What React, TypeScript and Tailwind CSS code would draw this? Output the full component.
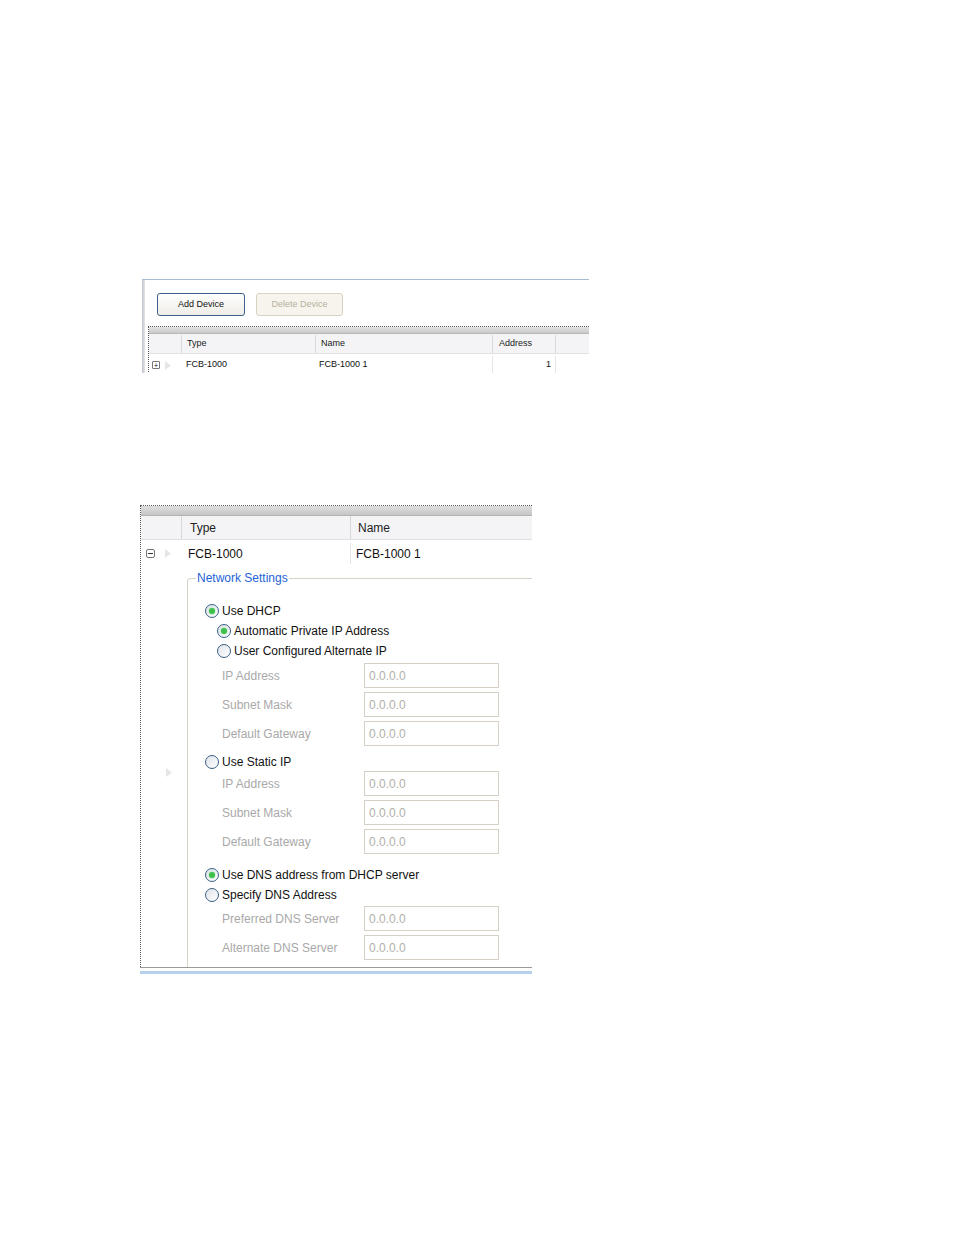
import React from "react";

function Radio({ checked }: { checked?: boolean }) {
  return (
    <span className="flex h-[14px] w-[14px] shrink-0 items-center justify-center rounded-full border border-[#3a5f86] bg-gradient-to-br from-[#dfe3e9] to-white">
      {checked && <span className="h-[6px] w-[6px] rounded-full bg-[#3fbf4c] shadow-[0_0_2px_#7fd98a]" />}
    </span>
  );
}

function RadioRow({ label, checked, indent, h }: { label: string; checked?: boolean; indent?: boolean; h: string }) {
  return (
    <div className={`flex items-center gap-[3px] text-[#111] ${h} ${indent ? "pl-[29px]" : "pl-[17px]"}`}>
      <Radio checked={checked} />
      <span>{label}</span>
    </div>
  );
}

function Field({ label }: { label: string }) {
  return (
    <div className="flex h-[29px] items-center pl-[34px]">
      <span className="w-[142px] text-[#a9a9a9]">{label}</span>
      <div className="flex h-[25px] w-[135px] items-center border border-[#d6d0c6] pl-[4px] text-[#b2afa9]">0.0.0.0</div>
    </div>
  );
}

function Arrow() {
  return (
    <svg width="6" height="9" viewBox="0 0 6 9">
      <path d="M0 0 L6 4.5 L0 9 Z" fill="#e6e6e6" />
    </svg>
  );
}

export default function App() {
  return (
    <div className="relative h-[1235px] w-[954px] bg-white pt-[279px] font-['Liberation_Sans',Arial,sans-serif]">
      {/* Panel 1 - device list */}
      <div className="ml-[142px] h-[94px] w-[447px] overflow-hidden border-t border-[#a6bcd2] text-[9px]">
        <div className="flex h-full">
          <div className="w-[3px] bg-gradient-to-r from-[#bfc3ca] to-[#e4e6ea]" />
          <div className="flex-1">
            <div className="flex gap-[11px] pl-[12px] pt-[13px]">
              <button className="h-[23px] w-[88px] rounded-[3px] border border-[#3d5f88] bg-gradient-to-b from-white to-[#eeede6] text-[#111]">
                Add Device
              </button>
              <button className="h-[23px] w-[87px] rounded-[3px] border border-[#d9d3c2] bg-[#f6f4ec] text-[#b7b0a0]">
                Delete Device
              </button>
            </div>
            <div className="ml-[3px] mt-[10px] border-l border-t border-dotted border-[#555]">
              <div className="h-[7px] border-b border-[#b8b8b8] bg-gradient-to-b from-[#e2e2e2] to-[#c9c9c9]" />
              <div className="flex h-[20px] items-center border-b border-[#e2e2e6] bg-[#f4f4f6] pt-[1px] text-[#222]">
                <div className="h-full w-[32px]" />
                <div className="flex h-full w-[134px] items-center border-l border-[#dadada] pl-[5px]">Type</div>
                <div className="flex h-full w-[177px] items-center border-l border-[#dadada] pl-[5px]">Name</div>
                <div className="flex h-full w-[63px] items-center border-l border-[#dadada] pl-[6px]">Address</div>
                <div className="h-full flex-1 border-l border-[#dadada]" />
              </div>
              <div className="flex h-[20px] items-center pt-[2px] text-[#111]">
                <div className="flex h-full w-[32px] items-center gap-[5px] pl-[3px]">
                  <span className="flex h-[8px] w-[8px] items-center justify-center rounded-[1px] border border-[#777] text-[7px] leading-none">+</span>
                  <Arrow />
                </div>
                <div className="flex h-full w-[134px] items-center pl-[5px]">FCB-1000</div>
                <div className="flex h-full w-[177px] items-center pl-[4px]">FCB-1000 1</div>
                <div className="flex h-full w-[63px] items-center justify-end border-l border-[#e6e6e6] pr-[4px]">1</div>
                <div className="h-full flex-1 border-l border-[#e6e6e6]" />
              </div>
            </div>
          </div>
        </div>
      </div>

      {/* Panel 2 - expanded device */}
      <div className="ml-[140px] mt-[132px] w-[392px] text-[12px]">
        <div className="border-l border-t border-dotted border-[#555]">
          <div className="h-[10px] border-b border-[#b3b3b3] bg-gradient-to-b from-[#dedede] to-[#c6c6c6]" />
          <div className="flex h-[24px] border-b border-[#dfe0e6] bg-[#f4f4f7] text-[#222]">
            <div className="w-[40px]" />
            <div className="flex w-[169px] items-center border-l border-[#d8d8d8] pl-[8px]">Type</div>
            <div className="flex flex-1 items-center border-l border-[#d8d8d8] pl-[7px]">Name</div>
          </div>
          <div className="flex h-[24px] pt-[3px] text-[#111]">
            <div className="flex w-[40px] items-center gap-[10px] pl-[5px]">
              <span className="flex h-[9px] w-[9px] items-center justify-center rounded-[2px] border border-[#777]">
                <span className="h-px w-[5px] bg-[#333]" />
              </span>
              <Arrow />
            </div>
            <div className="flex w-[169px] items-center pl-[7px]">FCB-1000</div>
            <div className="flex flex-1 items-center border-l border-[#e4e4e4] pl-[5px]">FCB-1000 1</div>
          </div>
          <div className="flex">
            <div className="flex w-[46px] items-center pl-[25px] pt-[14px]">
              <Arrow />
            </div>
            <div className="relative mt-[14px] flex-1 rounded-tl-[4px] border-l border-t border-[#d3d3c6] pb-[5px] pt-[22px]">
              <span className="absolute -top-[8px] left-[8px] bg-white px-[1px] leading-[15px] text-[#2563d6]">Network Settings</span>
              <RadioRow label="Use DHCP" checked h="h-[20px]" />
              <RadioRow label="Automatic Private IP Address" checked indent h="h-[20px]" />
              <RadioRow label="User Configured Alternate IP" indent h="h-[20px]" />
              <Field label="IP Address" />
              <Field label="Subnet Mask" />
              <Field label="Default Gateway" />
              <div className="mt-[7px]">
                <RadioRow label="Use Static IP" h="h-[14px]" />
              </div>
              <Field label="IP Address" />
              <Field label="Subnet Mask" />
              <Field label="Default Gateway" />
              <div className="mt-[9px]">
                <RadioRow label="Use DNS address from DHCP server" checked h="h-[20px]" />
                <RadioRow label="Specify DNS Address" h="h-[19px]" />
              </div>
              <Field label="Preferred DNS Server" />
              <Field label="Alternate DNS Server" />
            </div>
          </div>
        </div>
        <div className="h-px bg-[#9a9a9a]" />
        <div className="mt-[3px] h-[3px] bg-[#b6d1ec]" />
      </div>
    </div>
  );
}
